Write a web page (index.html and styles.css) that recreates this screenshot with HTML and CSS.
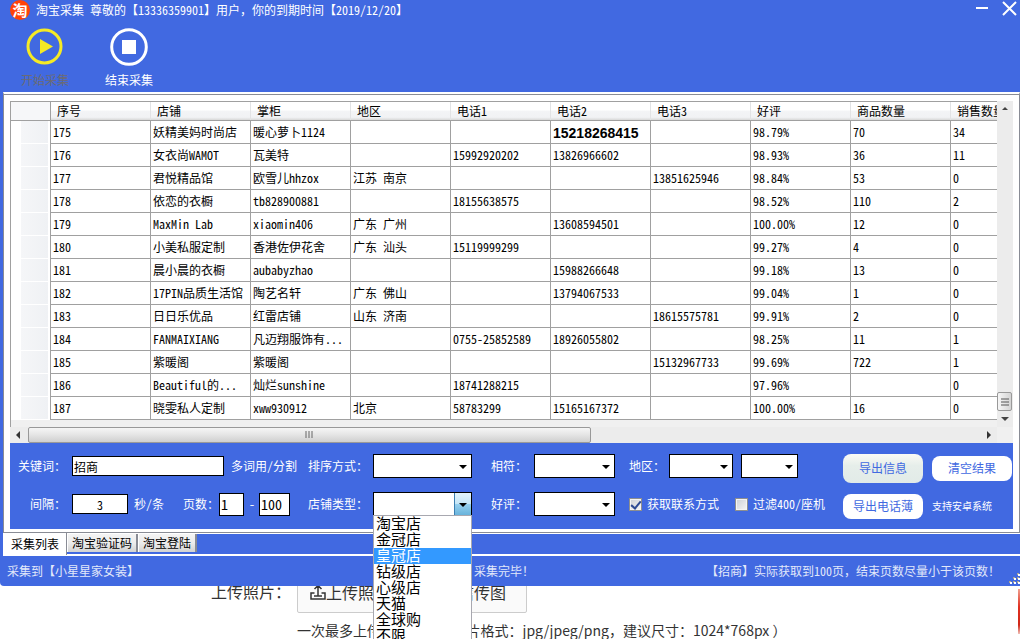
FILE: index.html
```html
<!DOCTYPE html>
<html lang="zh-CN">
<head>
<meta charset="utf-8">
<title>淘宝采集</title>
<link rel="stylesheet" href="styles.css">
</head>
<body>
<div class="window">
  <header class="titlebar">
    <span class="logo">淘</span>
    <h1 class="title">淘宝采集 尊敬的【13336359901】用户，你的到期时间【2019/12/20】</h1>
    <button class="winbtn" aria-label="最小化"><svg width="14" height="16" viewBox="0 0 14 16"><path d="M1 8h12" stroke="#fff" stroke-width="2"/></svg></button>
    <button class="winbtn" aria-label="关闭"><svg width="16" height="16" viewBox="0 0 16 16"><path d="M2 2l13 13M15 2L2 15" stroke="#fff" stroke-width="2"/></svg></button>
  </header>
  <div class="toolbar">
    <button class="tool tool-off" disabled><svg width="38" height="38" viewBox="0 0 38 38"><circle cx="18.500" cy="18.500" r="16.500" fill="none" stroke="#f5ea25" stroke-width="3"/><path d="M14 11v15l13-7.500z" fill="#f5ea25"/></svg><span>开始采集</span></button>
    <button class="tool"><svg width="38" height="38" viewBox="0 0 38 38"><circle cx="19" cy="19" r="17.300" fill="none" stroke="#fff" stroke-width="3"/><path d="M12 12h14v14H12z" fill="#fff"/></svg><span>结束采集</span></button>
  </div>
  <main class="page">
    <div class="gridview">
      <div class="tablewrap">
        <table>
          <colgroup><col class="c-head"><col><col><col><col><col><col><col><col><col><col></colgroup>
          <thead><tr><th></th><th>序号</th><th>店铺</th><th>掌柜</th><th>地区</th><th>电话1</th><th>电话2</th><th>电话3</th><th>好评</th><th>商品数量</th><th>销售数量</th></tr></thead>
          <tbody>
            <tr><th></th><td>175</td><td>妖精美妈时尚店</td><td>暖心萝卜1124</td><td></td><td></td><td class="strong">15218268415</td><td></td><td>98.79%</td><td>70</td><td>34</td></tr>
            <tr><th></th><td>176</td><td>女衣尚WAMOT</td><td>瓦美特</td><td></td><td>15992920202</td><td>13826966602</td><td></td><td>98.93%</td><td>36</td><td>11</td></tr>
            <tr><th></th><td>177</td><td>君悦精品馆</td><td>欧雪儿hhzox</td><td>江苏 南京</td><td></td><td></td><td>13851625946</td><td>98.84%</td><td>53</td><td>0</td></tr>
            <tr><th></th><td>178</td><td>依恋的衣橱</td><td>tb828900881</td><td></td><td>18155638575</td><td></td><td></td><td>98.52%</td><td>110</td><td>2</td></tr>
            <tr><th></th><td>179</td><td>MaxMin Lab</td><td>xiaomin406</td><td>广东 广州</td><td></td><td>13608594501</td><td></td><td>100.00%</td><td>12</td><td>0</td></tr>
            <tr><th></th><td>180</td><td>小美私服定制</td><td>香港佐伊花舍</td><td>广东 汕头</td><td>15119999299</td><td></td><td></td><td>99.27%</td><td>4</td><td>0</td></tr>
            <tr><th></th><td>181</td><td>晨小晨的衣橱</td><td>aubabyzhao</td><td></td><td></td><td>15988266648</td><td></td><td>99.18%</td><td>13</td><td>0</td></tr>
            <tr><th></th><td>182</td><td>17PIN品质生活馆</td><td>陶艺名轩</td><td>广东 佛山</td><td></td><td>13794067533</td><td></td><td>99.04%</td><td>1</td><td>0</td></tr>
            <tr><th></th><td>183</td><td>日日乐优品</td><td>红雷店铺</td><td>山东 济南</td><td></td><td></td><td>18615575781</td><td>99.91%</td><td>2</td><td>0</td></tr>
            <tr><th></th><td>184</td><td>FANMAIXIANG</td><td>凡迈翔服饰有...</td><td></td><td>0755-25852589</td><td>18926055802</td><td></td><td>98.25%</td><td>11</td><td>1</td></tr>
            <tr><th></th><td>185</td><td>紫暖阁</td><td>紫暖阁</td><td></td><td></td><td></td><td>15132967733</td><td>99.69%</td><td>722</td><td>1</td></tr>
            <tr><th></th><td>186</td><td>Beautiful的...</td><td>灿烂sunshine</td><td></td><td>18741288215</td><td></td><td></td><td>97.96%</td><td></td><td>0</td></tr>
            <tr><th></th><td>187</td><td>晓雯私人定制</td><td>xww930912</td><td>北京</td><td>58783299</td><td>15165167372</td><td></td><td>100.00%</td><td>16</td><td>0</td></tr>
          </tbody>
        </table>
      </div>
      <div class="vscroll">
        <svg width="16" height="16" viewBox="0 0 16 16"><path d="M5 9l3-3 3 3z" fill="#444"/></svg>
        <div class="vthumb"><svg width="10" height="10" viewBox="0 0 10 10"><path d="M1 2h8M1 5h8M1 8h8" stroke="#555"/></svg></div>
        <svg width="16" height="16" viewBox="0 0 16 16"><path d="M4 6l4 4 4-4z" fill="#444"/></svg>
      </div>
      <div class="hscroll">
        <svg width="18" height="16" viewBox="0 0 18 16"><path d="M10 4L6 8l4 4z" fill="#333"/></svg>
        <div class="hthumb"><svg width="10" height="10" viewBox="0 0 10 10"><path d="M2 1v7M5 1v7M8 1v7" stroke="#666"/></svg></div>
        <svg width="18" height="16" viewBox="0 0 18 16"><path d="M8 4l4 4-4 4z" fill="#333"/></svg>
      </div>
    </div>
    <form class="panel">
      <div class="fields">
        <label class="lead" for="kw">关键词：</label><input class="kw" id="kw" value="招商"><span class="note">多词用/分割</span>
      </div>
      <label for="sort">排序方式：</label>
      <div class="combo"><select id="sort"><option></option></select></div>
      <label for="match">相符：</label>
      <div class="combo combo-m"><select id="match"><option></option></select></div>
      <div class="fields">
        <label class="region" for="prov">地区：</label>
        <div class="combo combo-p"><select id="prov"><option></option></select></div>
        <div class="combo combo-c"><select aria-label="城市"><option></option></select></div>
      </div>
      <button type="button" class="pill pill-hot">导出信息</button>
      <button type="button" class="pill">清空结果</button>

      <div class="fields">
        <label class="lead" for="gap">间隔：</label><input class="gap" id="gap" value="3"><span class="unit">秒/条</span>
        <label for="from">页数：</label><input class="from" id="from" value="1"><span class="dash">-</span><input class="to" aria-label="结束页" value="100">
      </div>
      <label for="kind">店铺类型：</label>
      <div class="combo combo-open"><select id="kind"><option></option></select>
        <ul class="menu">
          <li>淘宝店</li><li>金冠店</li><li class="picked">皇冠店</li><li>钻级店</li><li>心级店</li><li>天猫</li><li>全球购</li><li>不限</li>
        </ul>
      </div>
      <label for="rate">好评：</label>
      <div class="combo combo-m"><select id="rate"><option></option></select></div>
      <div class="fields checks">
        <label><input type="checkbox" checked>获取联系方式</label>
        <label><input type="checkbox">过滤400/座机</label>
      </div>
      <button type="button" class="pill">导出电话薄</button>
      <span class="tiny">支持安卓系统</span>
    </form>
  </main>
  <nav class="tabs">
    <button class="tab tab-on">采集列表</button><button class="tab">淘宝验证码</button><button class="tab">淘宝登陆</button>
  </nav>
  <footer class="status">
    <span class="got">采集到【小星星家女装】</span><span>采集完毕！</span><span class="sum">【招商】实际获取到100页，结束页数尽量小于该页数！</span>
    <svg class="grip" width="12" height="12" viewBox="0 0 12 12"><path d="M9 0h2v2H9zM5 4h2v2H5zM9 4h2v2H9zM1 8h2v2H1zM5 8h2v2H5zM9 8h2v2H9z" fill="#a9a393"/><path d="M10 1h2v2h-2zM6 5h2v2H6zM10 5h2v2h-2zM2 9h2v2H2zM6 9h2v2H6zM10 9h2v2h-2z" fill="#fff"/></svg>
  </footer>
</div>
<section class="web">
  <div class="upload">
    <span class="uplabel">上传照片：</span>
    <div class="upbox">
      <button class="uplink"><svg width="16" height="16" viewBox="0 0 16 16"><path d="M4.500 9H1v6h14V9h-3.500M8 12V2M4.500 5L8 1.500 11.500 5M4 12h8" fill="none" stroke="#333" stroke-width="1.500"/></svg>上传照片</button>
      <button class="uplink">微信传图</button>
    </div>
  </div>
  <p class="hint">一次最多上传10张照片（图片格式：jpg/jpeg/png，建议尺寸：1024*768px ）</p>
  <span class="edge"></span>
</section>
</body>
</html>
```
FILE: styles.css
```css
* { box-sizing: border-box; }
body {
  margin: 0;
  height: 100vh;
  overflow: hidden;
  background: #fff;
  color: #000;
  font: 12px/16px "Noto Sans Mono CJK SC", "Noto Sans CJK SC", sans-serif;
}
button, input, select { font: inherit; color: inherit; }
button { background: none; border: 0; padding: 0; }

.window {
  position: relative;
  z-index: 1;
  display: flex;
  flex-direction: column;
  background: #4169e1;
  color: #fff;
  border-bottom-left-radius: 4px;
}
.titlebar {
  display: flex;
  align-items: center;
  height: 20px;
  padding: 0 3px 0 10px;
}
.logo {
  width: 20px;
  height: 20px;
  margin-right: 6px;
  border-radius: 50%;
  background: #ff4208;
  font: bold 15px/20px "Noto Sans CJK SC", sans-serif;
  text-align: center;
}
.title { flex: 1; margin: 0; font-size: 12px; font-weight: normal; line-height: 20px; white-space: nowrap; }
.winbtn { height: 16px; margin-left: 12px; align-self: flex-start; }
.winbtn svg { display: block; }

.toolbar { display: flex; gap: 36px; height: 72px; padding: 8px 21px 0; }
.tool { display: flex; flex-direction: column; align-items: center; width: 48px; gap: 6px; }
.tool-off { color: #6b6b73; }

.page {
  margin-left: 3px;
  padding: 6px 6px 3px 6px;
  background: #fff;
  border-top: 2px solid #fff;
  border-left: 1px solid #898c95;
  border-right: 1px solid #898c95;
  border-bottom: 1px solid #898c95;
  box-shadow: inset 0 1px #898c95;
}
.gridview {
  display: grid;
  grid-template-columns: minmax(0, 1fr) 16px;
  margin-top: 1px;
  background: #f0f0f0;
  color: #000;
}
.tablewrap {
  overflow: hidden;
  height: 326px;
  border-top: 1px solid #a0a0a0;
  border-left: 1px solid #a0a0a0;
}
table { width: 1040px; table-layout: fixed; border-collapse: separate; border-spacing: 0; background: #fff; }
col { width: 100px; }
.c-head { width: 40px; }
thead th {
  height: 19px;
  padding: 0 0 0 6px;
  border-bottom: 1px solid #a0a0a0;
  background: linear-gradient(#fff 45%, #f3f4f6 50%, #f1f2f4 85%, #d8d8d8);
  box-shadow: inset -1px 0 #e2e3e5;
  font-weight: normal;
  text-align: left;
  line-height: 16px;
}
thead th:first-child { border-right: 1px solid #a0a0a0; background: #f6f7f9; box-shadow: none; }
td {
  height: 23px;
  padding: 0 0 0 2px;
  border-right: 1px solid #a0a0a0;
  border-bottom: 1px solid #a0a0a0;
  line-height: 16px;
  white-space: nowrap;
}
.strong { font: bold 14px/20px "Liberation Sans", sans-serif; padding-top: 2px; }
tbody th {
  padding: 0;
  border-right: 1px solid #a0a0a0;
  background: linear-gradient(to right, #fff 10px, #f5f6f8 10px, #eff1f4 37px, #fff 37px);
  box-shadow: inset 0 -1px #fff;
}
.vscroll { display: flex; flex-direction: column; background: #ececec; }
.vscroll svg, .hscroll svg { display: block; }
.vthumb {
  display: flex;
  align-items: center;
  justify-content: center;
  height: 19px;
  margin: auto 1px 0 0;
  border: 1px solid #999;
  border-radius: 2px;
  background: linear-gradient(to right, #f6f6f6, #d4d4d4);
}
.hscroll { display: flex; grid-column: 1; height: 16px; background: #ececec; }
.hthumb {
  display: flex;
  align-items: center;
  justify-content: center;
  width: 57%;
  margin-right: auto;
  border: 1px solid #999;
  border-radius: 2px;
  background: linear-gradient(#f6f6f6, #e4e4e4 50%, #cfcfcf);
}

.panel {
  display: grid;
  grid-template-columns: 298px 65px 118px 43px 95px minmax(214px, 1fr) 89px 81px;
  grid-template-rows: 38px 38px;
  align-items: center;
  padding: 4px 0 6px;
  background: #4169e1;
  white-space: nowrap;
}
.fields { display: flex; align-items: center; }
.lead { width: 62px; padding-right: 6px; text-align: right; }
.panel input:not([type]) { border: 1px solid #000; background: #fff; color: #000; padding: 0 1px; }
.panel .kw { width: 152px; height: 20px; }
.note { margin-left: 7px; }
.panel .gap { width: 56px; height: 20px; text-align: center; }
.unit { margin: 0 19px 0 6px; }
.panel .from { width: 25px; height: 23px; font-size: 14px; }
.panel .to { width: 31px; height: 23px; font-size: 14px; }
.dash { margin: 0 4px 0 5px; }
.combo { position: relative; width: 99px; height: 24px; }
.combo-m { width: 81px; }
.combo-p { width: 64px; }
.combo-c { width: 57px; margin-left: 8px; }
.region { width: 40px; }
.combo select { width: 100%; height: 100%; appearance: none; border: 1px solid #000; border-radius: 0; background: #fff; }
.combo::after {
  content: "";
  position: absolute;
  right: 5px;
  top: 11px;
  border: 4px solid transparent;
  border-top-color: #000;
  border-bottom: 0;
}
.combo-open::before {
  content: "";
  position: absolute;
  right: 1px;
  top: 1px;
  bottom: 1px;
  width: 16px;
  border-left: 1px solid #3c7fb1;
  background: linear-gradient(#e3f4fc, #c4e5f6 50%, #98d1ef 50%, #68b3db);
}
.menu {
  position: absolute;
  left: 0;
  right: 0;
  top: 23px;
  margin: 0;
  padding: 0;
  list-style: none;
  border: 1px solid #a8a8b0;
  background: #fff;
  color: #000;
  font-size: 15px;
  line-height: 16px;
}
.menu li { height: 16px; padding-left: 2px; line-height: 14px; }
.menu .picked { background: #3399ff; color: #fff; }
.checks { gap: 16px; }
.checks label { display: flex; align-items: center; gap: 5px; }
.checks input {
  display: grid;
  place-items: center;
  appearance: none;
  width: 13px;
  height: 13px;
  margin: 0;
  border: 1px solid #8e8f8f;
  background: linear-gradient(135deg, #cbcfd5, #f6f6f6);
  box-shadow: inset 0 0 0 1px #f4f4f4;
}
.checks input:checked::after {
  content: "";
  width: 4px;
  height: 8px;
  border: solid #2c4a94;
  border-width: 0 2px 2px 0;
  transform: rotate(40deg);
}
.pill { width: 80px; height: 25px; margin-top: 4px; border-radius: 8px; background: #fff; color: #4169e1; }
.pill-hot { height: 29px; background: linear-gradient(#fbfbf5, #e6eeea 40%, #e2ebe8); }
.tiny { margin-top: 4px; font-size: 10px; }

.tabs { display: flex; align-items: flex-start; height: 23px; margin-left: 3px; border-top: 1px solid #fff; border-bottom: 2px solid #fff; }
.tab {
  height: 18px;
  padding: 0 4px;
  border-right: 2px solid #898c95;
  border-left: 1px solid #fff;
  background: linear-gradient(#f4f4f4, #ececec 50%, #d2d2d2);
  color: #000;
  line-height: 14px;
}
.tab-on { height: 22px; padding: 0 7px; background: #fff; border-right-width: 1px; margin-top: -1px; }
.status { display: flex; align-items: center; height: 30px; padding-left: 7px; color: #e2e8fa; white-space: nowrap; }
.got { width: 467px; }
.sum { margin-left: auto; }
.grip { align-self: flex-end; margin: 0 0 1px 8px; }

.web { position: relative; margin-top: -11px; color: #333; font-family: "Noto Sans CJK SC", sans-serif; }
.upload { display: flex; padding-left: 211px; }
.uplabel { width: 86px; font-size: 16px; line-height: 32px; }
.upbox { display: flex; gap: 52px; width: 230px; height: 38px; padding: 0 12px; border: 1px solid #ccc; border-radius: 2px; background: #fafafa; }
.uplink { display: flex; align-items: center; height: 32px; font-size: 16px; line-height: 32px; white-space: nowrap; }
.hint { margin: 7px 0 0 297px; font-size: 14px; line-height: 20px; }
.edge { position: absolute; right: 0; top: 14px; width: 2px; height: 45px; background: linear-gradient(#f0a090, #e03020 40%, #d02818 80%, #f0c0b8); }
```
